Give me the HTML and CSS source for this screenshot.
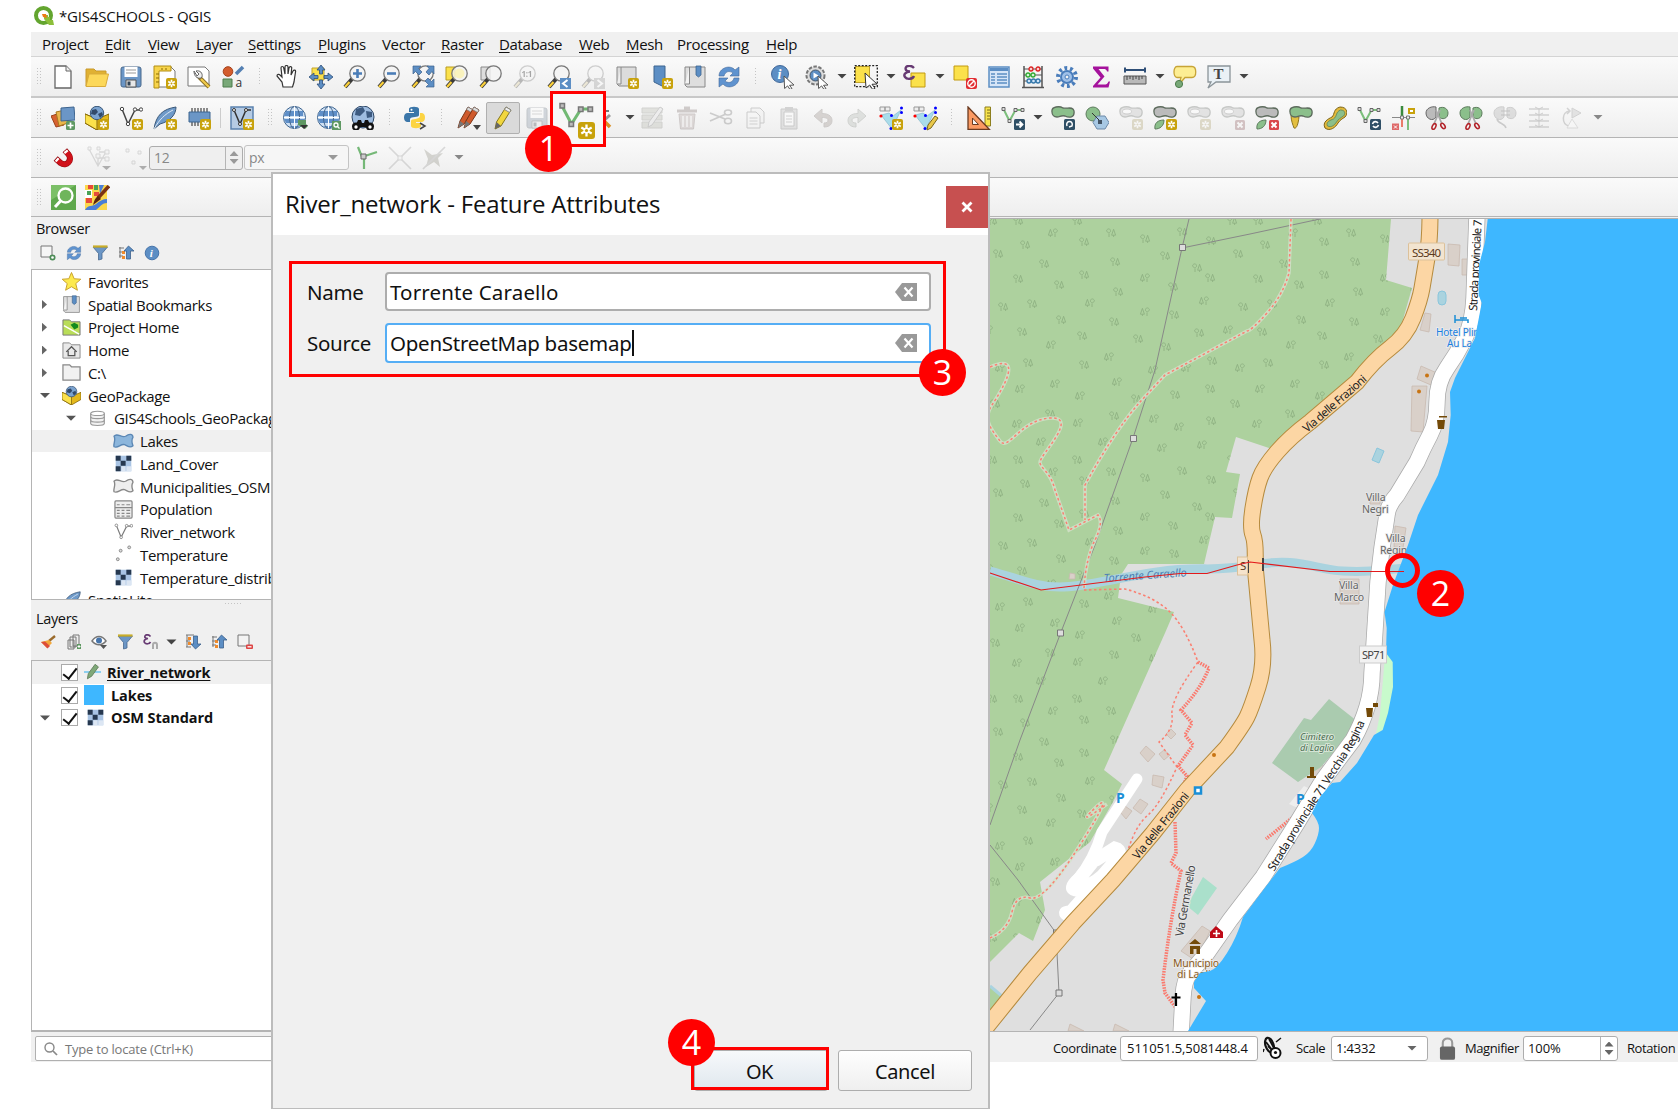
FILE: index.html
```html
<!DOCTYPE html>
<html lang="en">
<head>
<meta charset="utf-8">
<title>*GIS4SCHOOLS - QGIS</title>
<link rel="stylesheet" href="styles.css">
</head>
<body>
<svg class="defs" aria-hidden="true">
<defs>
<g id="star"><rect x="13" y="13" width="11" height="11" rx="2" fill="#c8a20c"/><path d="M18.5 14.7v7.6M15.2 16.6l6.6 3.8M21.8 16.6l-6.6 3.8" stroke="#fff" stroke-width="1.7"/><circle cx="18.5" cy="18.5" r="1" fill="#c8a20c"/></g>
<g id="redx"><rect x="14" y="14" width="10" height="10" rx="1.5" fill="#d9474b"/><path d="M16.5 16.5l5 5M21.5 16.5l-5 5" stroke="#fff" stroke-width="2"/></g>
<g id="lens"><path d="M9 14l-7 8" stroke="#3a3a3a" stroke-width="4"/><path d="M6.5 17l-4.5 5" stroke="#fbd13a" stroke-width="2.2"/><circle cx="14.500" cy="8.500" r="7.700" fill="#f4f4f4" fill-opacity=".8" stroke="#777" stroke-width="1.3"/></g>
<g id="cursor"><path d="M13 11l10 9-4.500.300 2.500 3.200-2 1-2.400-3.600-3 2.600z" fill="#fff" stroke="#555" stroke-width="1"/></g>
<g id="blob"><path d="M1 6c-1-6 8-6 11-4 4 1 10-2 11 3 1 7-5 7-9 5-4-1-5 1-8 1-3 0-5-2-5-5z" stroke="#5d6b5d" stroke-width="1.300"/></g>
<g id="nodes"><path d="M2.500 3l6 12 6-11h7" fill="none" stroke="#7cbf7c" stroke-width="2"/><g fill="#ddd" stroke="#666"><path d="M1 1.500h3v3H1zM7 13.500h3v3H7zM13 2.500h3v3h-3zM20 2.500h3v3h-3z"/></g></g>
<g id="raster"><path d="M1 1h22v22H1z" fill="#a9c4e4"/><path d="M1 1h7v7H1zM16 1h7v7h-7zM8 8h7v7H8zM1 16h7v7H1z" fill="#26384f"/><path d="M16 16h7v7h-7zM9 16h6v7H9z" fill="#dce6f3"/></g>
<g id="snip"><path d="M11 4l6 14M15 4L9 18" stroke="#aaa" stroke-width="1.800"/><ellipse cx="9" cy="20.500" rx="1.700" ry="3" transform="rotate(25 9 20.500)" fill="none" stroke="#b3242a" stroke-width="1.600"/><ellipse cx="18" cy="20" rx="1.700" ry="3" transform="rotate(-35 18 20)" fill="none" stroke="#b3242a" stroke-width="1.600"/></g>
</defs>
<symbol id="i-new" viewBox="0 0 24 24"><path d="M4 1h11l5 5v17H4z" fill="#fff" stroke="#666" stroke-width="1.300"/><path d="M15 1v5h5" fill="#eee" stroke="#666"/></symbol>
<symbol id="i-open" viewBox="0 0 24 24"><path d="M1 4h8l2 2h10v4H4L3 21H1z" fill="#e0b133" stroke="#c99a2c"/><path d="M4 9h19.500l-3 12.500H1z" fill="#fcd85a" stroke="#d9ab3a"/></symbol>
<symbol id="i-save" viewBox="0 0 24 24"><rect x="2" y="2" width="20" height="20" rx="2" fill="#6b96c6" stroke="#49688c"/><path d="M5.500 2h13v10h-13z" fill="#fff"/><path d="M7 5h10M7 8h10" stroke="#999"/><path d="M7 15h10v7H7z" fill="#e8e8e8" stroke="#555"/><path d="M8.500 16.500h3v4h-3z" fill="#345"/></symbol>
<symbol id="i-newlayout" viewBox="0 0 24 24"><path d="M5 2h13l4 4v16H5z" fill="#fff" stroke="#777"/><path d="M1 1h17v5H6v17H1z" fill="#f7d44b" stroke="#b18d12"/><path d="M3 9h3M3 13h3M3 17h3M9 3v2M13 3v2" stroke="#8b6b05"/><use href="#star"/></symbol>
<symbol id="i-layouts" viewBox="0 0 24 24"><path d="M1 2h17l4 4v15H1z" fill="#fff" stroke="#777"/><path d="M12 12l10 10" stroke="#866c24" stroke-width="4"/><path d="M14 14l8 8" stroke="#f1cb4a" stroke-width="2.300"/><path d="M7 6c0 5 3 8 7 7l1-1c1-4-2-7-6-6l3 3-2 2z" fill="#eee" stroke="#666"/></symbol>
<symbol id="i-style" viewBox="0 0 24 24"><circle cx="7" cy="6.500" r="4.800" fill="#d35d2e" stroke="#a5421c"/><path d="M15 9l7-7" stroke="#5480b3" stroke-width="3.500"/><path d="M2 14h9v8H2z" fill="#78a878" stroke="#4d7c4d"/><text x="14.500" y="22" class="ico-sans">a</text></symbol>
<symbol id="i-pan" viewBox="0 0 24 24"><path d="M8 22l-1-5-5-6c0-2 2-2 3-1l2 2-1-9c0-2 2.500-2 2.700 0L10 9V2c0-2 3-2 3 0v7l1-6c.5-2 3-1.500 2.700 0L16 10l2-4c1-1.500 3-1 2.500 1L19 17l-1.500 5z" fill="#fff" stroke="#333" stroke-width="1.200"/></symbol>
<symbol id="i-pansel" viewBox="0 0 24 24"><path d="M3 3h12v12H3z" fill="#fbe14b" stroke="#c2a32a"/><path d="M12 0l4 5h-2.500v4H10.500V5H8zM12 24l4-5h-2.500v-4h-3v4H8zM0 12l5-4v2.500h4v3H5V16zM24 12l-5-4v2.500h-4v3h4V16z" fill="#5c8ec4" stroke="#2e4f79" stroke-width=".8"/></symbol>
<symbol id="i-zin" viewBox="0 0 24 24"><use href="#lens"/><path d="M14.500 4v9M10 8.500h9" stroke="#4b7db7" stroke-width="2.600"/></symbol>
<symbol id="i-zout" viewBox="0 0 24 24"><use href="#lens"/><path d="M10 8.500h9" stroke="#4b7db7" stroke-width="2.600"/></symbol>
<symbol id="i-zfull" viewBox="0 0 24 24"><use href="#lens"/><path d="M2 1h8L7.500 3.500 11 7 8 10 4.500 6.500 2 9zM23 1h-7l2 2.500L15 7l3 3 3-3.500L23 9zM23 22h-8l2.500-2.500L14 16l3-3 3.500 3.500L23 14z" fill="#5c8ec4" stroke="#3e618c" stroke-width=".7"/></symbol>
<symbol id="i-zsel" viewBox="0 0 24 24"><path d="M1 2h9v13H1z" fill="#fbe14b" stroke="#b99d20"/><use href="#lens"/><circle cx="14.500" cy="8.500" r="5" fill="#fbf3b0" opacity=".8"/></symbol>
<symbol id="i-zlay" viewBox="0 0 24 24"><path d="M2 2h9v13H2z" fill="#ddd" stroke="#888"/><use href="#lens"/></symbol>
<symbol id="i-z11" viewBox="0 0 24 24"><use href="#lens"/><text x="8.500" y="11.800" class="ico-11">1:1</text></symbol>
<symbol id="i-zlast" viewBox="0 0 24 24"><use href="#lens"/><path d="M13 13h11v11H13z" fill="#5c8ec4"/><path d="M20.500 15l-4.500 3.500 4.500 3.500" fill="none" stroke="#fff" stroke-width="2"/></symbol>
<symbol id="i-znext" viewBox="0 0 24 24"><use href="#lens"/><path d="M13 13h11v11H13z" fill="#999"/><path d="M16.500 15l4.500 3.500-4.500 3.500" fill="none" stroke="#fff" stroke-width="2"/></symbol>
<symbol id="i-mapview" viewBox="0 0 24 24"><path d="M2 2h19v19H4l-2-2z" fill="#dcdcdc" stroke="#888"/><path d="M6 2v17H2" fill="#eee" stroke="#888"/><use href="#star"/></symbol>
<symbol id="i-newbm" viewBox="0 0 24 24"><path d="M5 1h11v20h-3L5 17z" fill="#5c8ec4" stroke="#3d648f"/><use href="#star"/></symbol>
<symbol id="i-bm" viewBox="0 0 24 24"><path d="M2 2h20v20H4l-2-2z" fill="#dedede" stroke="#888"/><path d="M6.500 2v17H2" fill="#f3f3f3" stroke="#888"/><path d="M13 1h5v9l-2.500 2-2.500-2z" fill="#5c8ec4" stroke="#3d648f" stroke-width=".8"/></symbol>
<symbol id="i-refresh" viewBox="0 0 24 24"><path d="M2 11C2 3 13-1 18 5l4-3v9h-9l3-3c-4-3-8-1-9 3zM22 13c0 8-11 12-16 6l-4 3v-9h9l-3 3c4 3 8 1 9-3z" fill="#5f93cf" stroke="#44699a" stroke-width=".6"/></symbol>
<symbol id="i-ident" viewBox="0 0 24 24"><circle cx="9" cy="9" r="8.500" fill="#5c8ec4" stroke="#42699a"/><text x="6.500" y="14" class="ico-i">i</text><use href="#cursor"/></symbol>
<symbol id="i-action" viewBox="0 0 24 24"><circle cx="10.500" cy="10.500" r="9" fill="#ddd" stroke="#777" stroke-width="2" stroke-dasharray="3.500 1.500"/><circle cx="10.500" cy="10.500" r="5.500" fill="#5c8ec4" stroke="#456"/><path d="M8.500 7.500l5 3-5 3z" fill="#fff"/><use href="#cursor"/></symbol>
<symbol id="i-select" viewBox="0 0 24 24"><path d="M1.500 1.500h14v16h-14z" fill="#fbe14b" stroke="#c2a32a"/><path d="M.700.700h22.600v21H.7z" fill="none" stroke="#222" stroke-width="1.300" stroke-dasharray="2 1.500"/><path d="M11 8l12 11-5 .3 3 4-2.300 1.200-3-4.500-3.700 3z" fill="#fff" stroke="#333"/></symbol>
<symbol id="i-expr" viewBox="0 0 24 24"><path d="M8 8h14v14H8z" fill="#fbe14b" stroke="#c29a10"/><path d="M11 3C7-1 1 1 3 5c.7 1.500 2 1.500 4 1.500C3 7 0 9 2 12c2 3 8 2 9-1" fill="none" stroke="#673a73" stroke-width="2.400"/></symbol>
<symbol id="i-desel" viewBox="0 0 24 24"><path d="M1 1h14v14H1z" fill="#fbe14b" stroke="#c29a10"/><rect x="13" y="13" width="11" height="11" rx="2" fill="#e22d32"/><circle cx="18.500" cy="18.500" r="3.700" fill="none" stroke="#fff" stroke-width="1.400"/><path d="M16 21l5-5" stroke="#fff" stroke-width="1.400"/></symbol>
<symbol id="i-table" viewBox="0 0 24 24"><path d="M2 2h20v20H2z" fill="#d6e5f7" stroke="#5c8ec4" stroke-width="1.500"/><path d="M3 4.500h18" stroke="#5c8ec4" stroke-width="3"/><path d="M4 9h4M10 9h10M4 12h4M10 12h10M4 15h4M10 15h10M4 18h4M10 18h10" stroke="#5c8ec4" stroke-width="1.300"/></symbol>
<symbol id="i-abacus" viewBox="0 0 24 24"><path d="M3 1v21M21 1v21M1 22.500h22" stroke="#555" stroke-width="1.500"/><path d="M3 4h18M3 10h18M3 16h18" stroke="#555"/><g stroke-width="1.300"><g fill="#fbd0d0" stroke="#d22"><circle cx="10" cy="4" r="2"/><circle cx="17" cy="4" r="2"/></g><g fill="#d5f2d5" stroke="#3a3"><circle cx="7" cy="10" r="2"/><circle cx="12" cy="10" r="2"/></g><g fill="#d0e4f8" stroke="#37a"><circle cx="8" cy="16" r="2"/><circle cx="12.500" cy="16" r="2"/><circle cx="17" cy="16" r="2"/></g></g></symbol>
<symbol id="i-gear" viewBox="0 0 24 24"><circle cx="12" cy="12" r="9" fill="none" stroke="#4a7dbb" stroke-width="4" stroke-dasharray="2.800 2.850"/><circle cx="12" cy="12" r="6" fill="#9fc0e8" stroke="#4a7dbb" stroke-width="2"/><circle cx="12" cy="12" r="2" fill="#f3f3f3" stroke="#4a7dbb"/></symbol>
<symbol id="i-sum" viewBox="0 0 24 24"><path d="M4 1.500h15.500v5H18c-.5-2-1.500-2.500-4-2.500H9.500l6 7.500-7 8H15c2.500 0 3.500-.5 4.500-3h1.500l-1.500 6H4V21l7.500-8.500L4 3.500z" fill="#a5129c"/></symbol>
<symbol id="i-measure" viewBox="0 0 24 24"><path d="M2 5h20M2 2.500v5M22 2.500v5" stroke="#2f4f77" stroke-width="2"/><path d="M1 11h22v8H1z" fill="#b9b9b9" stroke="#555"/><path d="M4 11v4M7 11v3M10 11v4M13 11v3M16 11v4M19 11v3" stroke="#444"/></symbol>
<symbol id="i-tip" viewBox="0 0 24 24"><path d="M4 1.500h15c5 0 5 11 0 11h-7l-6 7 2-7H4c-4 0-4-11 0-11z" fill="#fdee93" stroke="#c7a436" stroke-width="1.300"/><circle cx="6" cy="19" r="3.600" fill="#78a878" stroke="#4d7c4d"/></symbol>
<symbol id="i-text" viewBox="0 0 24 24"><path d="M1 1h22v16H9l-8 6 3-6H1z" fill="#eaf1f6" stroke="#8b9499" stroke-width="1.300"/><text x="6.500" y="14" class="ico-t">T</text></symbol>
<symbol id="i-ds" viewBox="0 0 24 24"><path d="M0 10l9-3 4 12-8 2z" fill="#d76230" stroke="#9c421b"/><path d="M5 6l9-2 3 13-9 3z" fill="#e9b64b" stroke="#a7781d"/><path d="M10 2l13-1 1 13-14 1z" fill="#6b96c6" stroke="#3d648f"/><rect x="15" y="15" width="9" height="9" rx="1.500" fill="#5e9862"/><path d="M19.500 16.500v6M16.500 19.500h6" stroke="#fff" stroke-width="1.700"/></symbol>
<symbol id="i-gpkg" viewBox="0 0 24 24"><path d="M0 8l12 5 12-5v9l-12 7-12-7z" fill="#e4b81c" stroke="#85680a"/><path d="M0 8l12 5v11L0 17z" fill="#fbe14b" stroke="#85680a"/><circle cx="12" cy="7" r="6.700" fill="#7ba3d0" stroke="#3b5878"/><path d="M7 4l4-1 2 3-3 3-4-1zM13 8l4-2 1 3-3 3z" fill="#324a6b"/></symbol>
<symbol id="i-vec" viewBox="0 0 24 24"><path d="M3 3l6 15 7-14h6" fill="none" stroke="#444" stroke-width="1.500"/><g fill="#fff" stroke="#444"><circle cx="3" cy="3" r="1.700"/><circle cx="9" cy="18" r="1.700"/><circle cx="16" cy="3.500" r="1.700"/><circle cx="22" cy="3.500" r="1.700"/></g></symbol>
<symbol id="i-feather" viewBox="0 0 24 24"><path d="M1 23C3 9 10 3 23 1c0 7-5 14-16 17z" fill="#6f9ac9" stroke="#3b5878"/><path d="M1 23C6 14 12 8 20 4" stroke="#dce8f5" fill="none"/></symbol>
<symbol id="i-mem" viewBox="0 0 24 24"><path d="M5 2v18M8 2v18M11 2v18M14 2v18M17 2v18M20 2v18" stroke="#444" stroke-width="1.200"/><path d="M2 6h21v10H2z" fill="#6b96c6" stroke="#3d648f"/></symbol>
<symbol id="i-virt" viewBox="0 0 24 24"><path d="M1 1h22v22H1z" fill="#b5cbe4" stroke="#5b82af" stroke-width="1.500"/><path d="M4 4l6 14 6-14h5" fill="none" stroke="#333" stroke-width="1.500"/><g fill="#fff" stroke="#333"><circle cx="4" cy="4" r="1.500"/><circle cx="10" cy="18" r="1.500"/><circle cx="16" cy="4" r="1.500"/></g></symbol>
<symbol id="i-globe" viewBox="0 0 24 24"><circle cx="11.500" cy="11.500" r="11" fill="#cfe0f3" stroke="#3d648f"/><path d="M3 5h17v5H1zM1 13h21l-2 4H3zM6 20h11l-5 3z" fill="#5f8fc8"/><ellipse cx="11.500" cy="11.500" rx="5" ry="11" fill="none" stroke="#44668d"/><path d="M11.500.5v22M1 11.500h21" stroke="#fff"/></symbol>
<symbol id="i-bino" viewBox="0 0 24 24"><circle cx="12" cy="11" r="11" fill="#9ebce0" stroke="#2e4664"/><path d="M5 3l7-2 2 4-5 5-5-1zM15 5l6 1v5l-5 1z" fill="#3d5a80"/><path d="M4 21l3-7h3l1 3h2l1-3h3l3 7z" fill="#111"/><circle cx="5" cy="20.500" r="4" fill="#111"/><circle cx="19" cy="20.500" r="4" fill="#111"/><circle cx="5" cy="21" r="1.700" fill="#fff"/><circle cx="19" cy="21" r="1.700" fill="#fff"/></symbol>
<symbol id="i-py" viewBox="0 0 24 24"><path d="M6 3c0-3 10-3 10 0v6c0 3-8 1-9 4v3H4c-4 0-4-9 0-9h7V6H6z" fill="#3b76a9"/><path d="M17 7h2c4 0 4 9 0 9h-6v1h5v3c0 3-10 3-10 0v-5c0-3 9-1 9-5z" fill="#fcd443"/><circle cx="8.500" cy="3.700" r="1" fill="#fff"/><path d="M17 17l5 3-5 3" fill="none" stroke="#444" stroke-width="1.500"/></symbol>
<symbol id="i-pens" viewBox="0 0 24 24"><path d="M1 22l2-7L11 1l5 3-9 14z" fill="#cf5a2c" stroke="#7c3516"/><path d="M11 1l5 3-1.500 2.500-5-3z" fill="#ddd" stroke="#777" stroke-width=".7"/><path d="M1 22l2-7 4 3z" fill="#777"/><path d="M7 22l2-7L17 1l5 3-9 14z" fill="#cf5a2c" stroke="#7c3516"/><path d="M17 1l5 3-1.500 2.500-5-3z" fill="#ddd" stroke="#777" stroke-width=".7"/><path d="M7 22l2-7 4 3z" fill="#777"/></symbol>
<symbol id="i-pen" viewBox="0 0 24 24"><path d="M4 23l1.500-7L15 1l5 3-10 16z" fill="#f1d63e" stroke="#85761c"/><path d="M15 1l5 3-1.500 2.500-5-3z" fill="#eee" stroke="#888"/><path d="M4 23l1.500-7 4.500 4z" fill="#666"/></symbol>
<symbol id="i-tools" viewBox="0 0 24 24"><path d="M2 5h14" stroke="#777" stroke-width="2"/><path d="M5 20L17 9" stroke="#999" stroke-width="3"/><path d="M7 11l10 10" stroke="#d9912a" stroke-width="3.500"/></symbol>
<symbol id="i-form" viewBox="0 0 24 24"><path d="M1 2h20v5H1zM1 9h20v5H1zM1 16h20v6H1z" fill="#b3b89a" stroke="#888c75"/><path d="M7 21l1-5L19 1l3 2-11 16z" fill="#ddd" stroke="#777"/></symbol>
<symbol id="i-trash" viewBox="0 0 24 24"><path d="M4 8h16l-1.500 15h-13z" fill="#c59b93" stroke="#936b64"/><path d="M2 5h20M9 2h6" stroke="#936b64" stroke-width="3"/><path d="M8 10v11M12 10v11M16 10v11" stroke="#fff" stroke-width="1.300"/></symbol>
<symbol id="i-cut" viewBox="0 0 24 24"><path d="M1 7l15 6M1 15L17 8" stroke="#777" stroke-width="1.800"/><ellipse cx="19" cy="6.500" rx="3.500" ry="2.500" fill="none" stroke="#777" stroke-width="1.600"/><ellipse cx="19" cy="15" rx="3.500" ry="2.800" fill="none" stroke="#777" stroke-width="1.600"/></symbol>
<symbol id="i-copy" viewBox="0 0 24 24"><path d="M8 2h9l4 4v11H8z" fill="#eee" stroke="#777"/><path d="M4 6h9l4 4v12H4z" fill="#f5f5f5" stroke="#777"/><path d="M6.500 12h8M6.500 15h8M6.500 18h8" stroke="#888"/></symbol>
<symbol id="i-paste" viewBox="0 0 24 24"><path d="M4 3h16v20H4z" fill="#bbb" stroke="#777"/><path d="M7 6h10v14H7z" fill="#fff" stroke="#777"/><path d="M8 1h8v4H8z" fill="#888"/><path d="M9 10h6M9 13h6M9 16h6" stroke="#888"/></symbol>
<symbol id="i-undo" viewBox="0 0 24 24"><path d="M3 10l8-7v4.500c8 0 10 4 10 7 0 5-4 6.500-8 6.500v-4c3 0 4-1 4-3 0-1.500-2-2.500-6-2.500V17z" fill="#a9897a" stroke="#8a7468"/></symbol>
<symbol id="i-redo" viewBox="0 0 24 24"><path d="M21 10l-8-7v4.500c-8 0-10 4-10 7 0 5 4 6.500 8 6.500v-4c-3 0-4-1-4-3 0-1.500 2-2.500 6-2.500V17z" fill="#a9b9a5" stroke="#7d8c7a"/></symbol>
<symbol id="i-topo" viewBox="0 0 24 24"><path d="M2 9l11 14L22 4l-8 6-4-3z" fill="#a9dcea" stroke="#7fb2c6" stroke-width=".6"/><path d="M1 1h5v4H1zM6 1h5v4H6z" fill="#eee" stroke="#999"/><circle cx="2" cy="10" r="1.600" fill="#f00"/><g fill="#00f"><circle cx="22.500" cy="2" r="1.500"/><circle cx="22.500" cy="6.500" r="1.500"/><circle cx="12.500" cy="9.500" r="1.500"/><circle cx="12" cy="22.500" r="1.500"/></g></symbol>
<symbol id="i-tri" viewBox="0 0 24 24"><path d="M18 1h5.500v19H18z" fill="#f8e44d" stroke="#8d7f1e"/><path d="M20 4h3M20 7h3M20 10h3M20 13h3" stroke="#776b1c"/><path d="M1 1l21.500 22.500H1z" fill="#fa9a63" stroke="#6b3a20" stroke-width="1.300"/><path d="M5.500 12l6 6.500h-6z" fill="#f5f5f5" stroke="#6b3a20"/></symbol>
<symbol id="i-move" viewBox="0 0 24 24"><use href="#nodes"/><rect x="13" y="13" width="11" height="11" rx="1.500" fill="#2f4f66"/><path d="M15 18.500h6M18.500 15.500l3 3-3 3" fill="none" stroke="#fff" stroke-width="1.800"/></symbol>
<symbol id="i-rot" viewBox="0 0 24 24"><use href="#blob" fill="#8bbf8b"/><rect x="13" y="13" width="11" height="11" rx="1.500" fill="#2f4f66"/><path d="M16 20c-2-6 7-6 5 0l-3 1" fill="none" stroke="#fff" stroke-width="1.500"/></symbol>
<symbol id="i-simp" viewBox="0 0 24 24"><circle cx="8" cy="8" r="7" fill="#8bbf8b" stroke="#5d7c5d"/><path d="M12 10h8l4 6.500-4 6.500h-8l-4-6.500z" fill="#a7c8e4" stroke="#6c89a8"/><path d="M7 7l8 8" stroke="#333"/><path d="M13 14h4v4h-4z" fill="#456"/></symbol>
<symbol id="i-ring" viewBox="0 0 24 24"><use href="#blob" fill="#bbb"/><ellipse cx="8" cy="5.500" rx="4.500" ry="2.500" fill="#fff" stroke="#777"/><use href="#star"/></symbol>
<symbol id="i-part" viewBox="0 0 24 24"><use href="#blob" fill="#bbb"/><path d="M2 23c-1-6 3-9 9-9 0 6-4 9-9 9z" fill="#8bbf8b" stroke="#5d7c5d"/><use href="#star"/></symbol>
<symbol id="i-delring" viewBox="0 0 24 24"><use href="#blob" fill="#bbb"/><ellipse cx="8" cy="5.500" rx="4.500" ry="2.500" fill="#fff" stroke="#777"/><use href="#redx"/></symbol>
<symbol id="i-delpart" viewBox="0 0 24 24"><use href="#blob" fill="#bbb"/><path d="M2 23c-1-6 3-9 9-9 0 6-4 9-9 9z" fill="#8bbf8b" stroke="#5d7c5d"/><use href="#redx"/></symbol>
<symbol id="i-reshape" viewBox="0 0 24 24"><path d="M2 9c0 6 2 10 3 13 2 1 4-2 5-11z" fill="#e3bf3f" stroke="#8d7420"/><use href="#blob" fill="#8bbf8b"/></symbol>
<symbol id="i-offset" viewBox="0 0 24 24"><path d="M2 22c-3-6 3-9 7-11 3-3 1-8 8-10 8 0 8 7 5 10-3 2-5 3-7 6-2 4-8 9-13 5z" fill="#e3b93a" stroke="#7c651a"/><path d="M4.500 20c-2-4 3-6 6-7 4-3 2-7 7-9 5 0 5 4 3 6-3 2-5 3-7 6-2 3-5 6-9 4z" fill="#8bbf8b" stroke="#6b8f5b"/></symbol>
<symbol id="i-rev" viewBox="0 0 24 24"><use href="#nodes"/><rect x="13" y="13" width="11" height="11" rx="1.500" fill="#2f4f66"/><path d="M15.500 18c1-3 4-3 5.500-1M21.500 19c-1 3-4 3-5.500 1" fill="none" stroke="#fff" stroke-width="1.600"/></symbol>
<symbol id="i-trim" viewBox="0 0 24 24"><path d="M1 11.500h23" stroke="#888"/><path d="M11 0v11" stroke="#3a8a3e" stroke-width="2.500"/><path d="M11 13v8" stroke="#e5543a" stroke-width="1.500"/><path d="M17 13v11" stroke="#7cbf7c" stroke-width="2"/><path d="M9.500 10h3v3h-3zM15.500 10h3v3h-3z" fill="#eee" stroke="#777"/><path d="M17 2h7v6h-7z" fill="#c8a20c"/><path d="M19 4h3v2h-3z" fill="#fff"/><path d="M1 17.500h7V24H1z" fill="#de6a6a"/><path d="M3 19.500l3 3M6 19.500l-3 3" stroke="#fff"/></symbol>
<symbol id="i-split1" viewBox="0 0 24 24"><path d="M11 1v10C8 16 1 13 1 7c0-5 6-7 10-6z" fill="#bbb" stroke="#666"/><path d="M14 2c5-2 9 1 9 5 0 6-6 7-9 4z" fill="#8bbf8b" stroke="#5d7c5d"/><use href="#snip"/></symbol>
<symbol id="i-split2" viewBox="0 0 24 24"><path d="M11 1v10C8 16 1 13 1 7c0-5 6-7 10-6z" fill="#8bbf8b" stroke="#5d7c5d"/><path d="M14 2c5-2 9 1 9 5 0 6-6 7-9 4z" fill="#8bbf8b" stroke="#5d7c5d"/><use href="#snip"/></symbol>
<symbol id="i-merge" viewBox="0 0 24 24"><path d="M11 1v10C8 16 1 13 1 7c0-5 6-7 10-6zM14 2c5-2 9 1 9 5 0 6-6 7-9 4z" fill="#aaa" stroke="#777"/><path d="M8 5h9M8 9h9" stroke="#555"/><path d="M4 13c1 5 8 4 9 9" fill="none" stroke="#777" stroke-width="1.500"/></symbol>
<symbol id="i-mergea" viewBox="0 0 24 24"><path d="M2 3h20M2 9h20M2 15h20M2 21h20" stroke="#888" stroke-width="1.500"/><path d="M8 1l4 2 4-2M8 7l4 2 4-2M8 13l4 2 4-2M8 19l4 2 4-2M12 3v18" fill="none" stroke="#777"/></symbol>
<symbol id="i-rotp" viewBox="0 0 24 24"><path d="M8 20C0 18 1 6 8 5M6 2l3 3-3 3" fill="none" stroke="#888" stroke-width="1.500"/><path d="M11 2l9 5-9 5z" fill="#bbb" stroke="#888"/><path d="M11 13l6 9H6z" fill="#fff" stroke="#aaa"/></symbol>
<symbol id="i-magnet" viewBox="0 0 24 24"><g fill="none" stroke-width="6.500"><path d="M14 3.500L18 8C23 14 16 22 9.500 17.500L4 12.500" stroke="#8f0b10"/><path d="M14.500 4.200L18 8C23 14 16 22 9.500 17.500L4.700 13.200" stroke="#d0121a" stroke-width="5.500"/><path d="M14.500 4.200l1.600 1.900M4.700 13.200l1.800 1.600" stroke="#fff" stroke-width="4.800"/></g></symbol>
<symbol id="i-snapv" viewBox="0 0 24 24"><path d="M2 3l9 17L20 4M12 6h9M11 20V10M11 12h9" fill="none" stroke="#999" stroke-width="1.300"/><path d="M1 1h3v3H1zM10 1h3v3h-3zM18 4h4v4h-4zM18 11h4v4h-4zM9 8h4v4H9z" fill="#eee" stroke="#999"/></symbol>
<symbol id="i-snapp" viewBox="0 0 24 24"><path d="M3 3h3v3H3zM15 5h3v3h-3zM9 15h3v3H9z" fill="#eee" stroke="#999"/></symbol>
<symbol id="i-axis" viewBox="0 0 24 24"><path d="M4 1l4 10 15-5M10 12v11" fill="none" stroke="#75b877" stroke-width="2.200"/><path d="M7 8h5v5H7z" fill="#ccc" stroke="#666"/></symbol>
<symbol id="i-cross" viewBox="0 0 24 24"><path d="M1 1l22 22M23 1L1 23" stroke="#999" stroke-width="1.700"/><path d="M10 10h4v4h-4z" fill="#eee" stroke="#999"/></symbol>
<symbol id="i-cross2" viewBox="0 0 24 24"><path d="M2 3l8 6 11-2-5 5 2 9-6-5-8 5 2-8z" fill="#8f8e68"/><path d="M23 1L1 23" stroke="#999" stroke-width="1.700"/></symbol>
<symbol id="i-qms" viewBox="0 0 25 25"><path d="M0 0h25v25H0z" fill="#5fa84d"/><path d="M0 0h25L0 15z" fill="#7cc068"/><circle cx="14.500" cy="10.500" r="7" fill="#6fb55c" stroke="#fff" stroke-width="2.300"/><path d="M9.500 16L4 22" stroke="#fff" stroke-width="3"/></symbol>
<symbol id="i-qms2" viewBox="0 0 25 25"><path d="M0 0h22v25H0z" fill="#fbd84b"/><path d="M0 5h7v8H0z" fill="#fff"/><path d="M3 0h5v4H3zM1 13h6v5H1zM9 7h5v4H9z" fill="#e64b3b"/><path d="M9 0h4v5H9zM2 6h4v4H2z" fill="#4aa257"/><path d="M0 25c3-6 8-3 11-6s7-5 11-5v4c-5 0-6 3-11 7zM14 0h5l-4 9z" fill="#4a7fd6"/><path d="M24 1L13 13" stroke="#7c3313" stroke-width="3.600"/><path d="M13 11l3 3-8 6c1-4 2-7 5-9z" fill="#5b240c"/></symbol>
<symbol id="i-add" viewBox="0 0 16 16"><path d="M1 1h11v11H1z" fill="#f6f6f6" stroke="#777"/><circle cx="12.500" cy="12.500" r="2.200" fill="#fff" stroke="#4d8c57" stroke-width="1.700"/></symbol>
<symbol id="i-rem" viewBox="0 0 16 16"><path d="M1 1h11v11H1z" fill="#f3f3f3" stroke="#777"/><rect x="9" y="10.500" width="7" height="4.500" rx="1" fill="#d44"/><path d="M10.500 12.800h4" stroke="#fff" stroke-width="1.300"/></symbol>
<symbol id="i-filter" viewBox="0 0 16 16"><path d="M1 2l5.500 6.500V15L10 14V8.500L15.500 2z" fill="#6b96c6" stroke="#48688f" stroke-width=".8"/><path d="M1 1.500h14.500" stroke="#c9ad29" stroke-width="2.200"/></symbol>
<symbol id="i-up" viewBox="0 0 16 16"><path d="M1 3h5M1 7h4M1 11h4M2 2v11" stroke="#777"/><path d="M4 6h3v3H4zM4 11h3v3H4z" fill="#f08b2b"/><path d="M10.500 1L16 6h-3.500v8h-4V6H6z" fill="#5c8ec4" stroke="#3b5f8c" stroke-width=".8"/></symbol>
<symbol id="i-down" viewBox="0 0 16 16"><path d="M1 1h8M1 7h4M1 13h5M2 1v12" stroke="#777"/><path d="M3 3h3v3H3zM3 8h3v3H3z" fill="#f08b2b"/><path d="M10.500 15L16 10h-3.500V2h-4v8H6z" fill="#5c8ec4" stroke="#3b5f8c" stroke-width=".8"/></symbol>
<symbol id="i-info" viewBox="0 0 16 16"><circle cx="8" cy="8" r="6.800" fill="#5c8ec4" stroke="#4674aa"/><text x="5.700" y="12" class="ico-i2">i</text></symbol>
<symbol id="i-brush" viewBox="0 0 16 16"><path d="M9 7l6-5" stroke="#9a6a2c" stroke-width="2.300"/><path d="M1 8l8-2 3 3-5 5z" fill="#f3a83b"/><path d="M1 8l4-.5L10 12l-2.500 2.500z" fill="#dc4d3a"/></symbol>
<symbol id="i-group" viewBox="0 0 16 16"><path d="M2 6h6v9H2zM4 3h6v10H4zM7 1h6v11H7z" fill="#eee" stroke="#777"/><path d="M11 10h4v5h-4z" fill="#5e9862"/><path d="M13 11v3M11.500 12.500h3" stroke="#fff"/></symbol>
<symbol id="i-eye" viewBox="0 0 16 16"><path d="M1 7c4-6 10-6 14 0-4 5-10 5-14 0z" fill="#fff" stroke="#777" stroke-width="1.500"/><circle cx="8" cy="6.500" r="3" fill="#4674aa"/><path d="M9 11h7l-3.500 4z" fill="#555"/></symbol>
<symbol id="i-eps" viewBox="0 0 16 16"><path d="M7.500 2.500C5-.5 1 1 2 3.500c.5 1 1.500 1 3 1C2 5 .5 6.500 1.500 8.500c1.500 2 5 1.500 6-.5" fill="none" stroke="#673a73" stroke-width="1.700"/><path d="M10 15v-4c0-3 4-3 4 0v4" fill="none" stroke="#aaa" stroke-width="2"/></symbol>
<symbol id="i-fav" viewBox="0 0 20 20"><path d="M10 .5l2.800 6.600 7 .5-5.300 4.600 1.700 7L10 15.500l-6.200 3.700 1.700-7L.2 7.600l7-.5z" fill="#fdea4e" stroke="#c79f2a"/></symbol>
<symbol id="i-fproj" viewBox="0 0 20 20"><path d="M1 2h7l2 2h9v14H1z" fill="#b9dd58" stroke="#777"/><path d="M2 8l16 9" stroke="#fff" stroke-width="1.500"/><path d="M9 7l4-2 4 2v3l-4 2z" fill="#128a1e"/></symbol>
<symbol id="i-fhome" viewBox="0 0 20 20"><path d="M1 2h7l2 2h9v14H1z" fill="#e9e9e9" stroke="#888"/><path d="M4.500 11.500L10 6l5.500 5.500M6.500 10.500v5h7v-5" fill="none" stroke="#555" stroke-width="1.300"/></symbol>
<symbol id="i-folder" viewBox="0 0 20 20"><path d="M1 2h7l2 2h9v14H1z" fill="#f1f1f1" stroke="#888" stroke-width="1.300"/></symbol>
<symbol id="i-db" viewBox="0 0 20 20"><path d="M2 4v12c0 3 16 3 16 0V4" fill="#f1f1f1" stroke="#999" stroke-width="1.400"/><ellipse cx="10" cy="4" rx="8" ry="2.500" fill="#fff" stroke="#999" stroke-width="1.400"/><path d="M2 8c0 3 16 3 16 0M2 12c0 3 16 3 16 0" fill="none" stroke="#999" stroke-width="1.400"/></symbol>
<symbol id="i-poly" viewBox="0 0 20 16"><path d="M1 3C4-1 8 5 12 3c4-3 7-2 7 1-2 3-1 5 0 8-3 3-5 0-8-1-4-1-6 4-10 2C0 10 3 7 1 3z" stroke-width="1.300"/></symbol>
<symbol id="i-tbl" viewBox="0 0 20 20"><rect x="1" y="1" width="18" height="18" rx="1" fill="#eee" stroke="#888" stroke-width="1.300"/><path d="M3 5h3M8 5h3M13 5h4M1 8h18M3 11h3M8 11h3M13 11h4M3 14h3M8 14h3M13 14h4M3 17h3M8 17h3M13 17h4" stroke="#888" stroke-width="1.300"/></symbol>
<symbol id="i-pts" viewBox="0 0 20 20"><g fill="#ddd" stroke="#888"><circle cx="4" cy="15" r="1.500"/><circle cx="7" cy="6" r="1.500"/><circle cx="16" cy="2.500" r="1.500"/></g></symbol>
<symbol id="i-raster" viewBox="0 0 24 24"><use href="#raster"/></symbol>
<symbol id="i-editing" viewBox="0 0 20 20"><path d="M0 10h20" stroke="#6fc4ef" stroke-width="1.800"/><path d="M4 18l1-6 8-11 4 3-8 11z" fill="#7fa878" stroke="#5e7c58"/></symbol>
<symbol id="i-lock" viewBox="0 0 18 26"><path d="M4 12V7c0-6 10-6 10 0v5" fill="none" stroke="#999" stroke-width="2.200"/><rect x="1" y="11" width="16" height="14" rx="2" fill="#666"/></symbol>
<symbol id="i-ext" viewBox="0 0 20 22"><g fill="none" stroke="#111"><ellipse cx="6.500" cy="8" rx="4" ry="7.500" stroke-width="2.200" transform="rotate(-18 6.500 8)"/><path d="M3 5l6 8M6 2l5 9M5 9l4 4" stroke-width="1.800"/><circle cx="12.500" cy="16" r="5" fill="#fff" stroke-width="2"/><path d="M13 5l5-4M1 12l-1 3" stroke-width="1.500"/></g><circle cx="12.500" cy="15.500" r="1.600" fill="#111"/></symbol>
<symbol id="i-clear" viewBox="0 0 22 18"><path d="M7 0h15v18H7L0 9z" fill="#999"/><path d="M9.500 4.500l8 9M17.500 4.500l-8 9" stroke="#fff" stroke-width="2.200"/></symbol>
<symbol id="i-search" viewBox="0 0 14 14"><circle cx="5.500" cy="5.500" r="4.500" fill="none" stroke="#888" stroke-width="1.400"/><path d="M9 9l4 4" stroke="#888" stroke-width="1.700"/></symbol>
</svg>

<header class="titlebar">
<svg class="logo" viewBox="0 0 20 20"><circle cx="9.500" cy="9.500" r="7.500" fill="none" stroke="#63a52f" stroke-width="4"/><path d="M10 9h4v2h2v3h3l1 5h-5l-5-6z" fill="#8cbf3a"/><path d="M8 8h4l1 4-4-1z" fill="#ee7913"/></svg>
<span>*GIS4SCHOOLS - QGIS</span>
</header>

<div class="app">
<nav class="menubar"><span>Pro<u>j</u>ect</span><span><u>E</u>dit</span><span><u>V</u>iew</span><span><u>L</u>ayer</span><span><u>S</u>ettings</span><span><u>P</u>lugins</span><span>Vect<u>o</u>r</span><span><u>R</u>aster</span><span><u>D</u>atabase</span><span><u>W</u>eb</span><span><u>M</u>esh</span><span>Pro<u>c</u>essing</span><span><u>H</u>elp</span></nav>

<div class="toolbar"><i class="grip first"></i><b><svg><use href="#i-new"/></svg></b><b><svg><use href="#i-open"/></svg></b><b><svg><use href="#i-save"/></svg></b><b><svg><use href="#i-newlayout"/></svg></b><b><svg><use href="#i-layouts"/></svg></b><b><svg><use href="#i-style"/></svg></b><i class="grip"></i><b><svg><use href="#i-pan"/></svg></b><b><svg><use href="#i-pansel"/></svg></b><b><svg><use href="#i-zin"/></svg></b><b><svg><use href="#i-zout"/></svg></b><b><svg><use href="#i-zfull"/></svg></b><b><svg><use href="#i-zsel"/></svg></b><b><svg><use href="#i-zlay"/></svg></b><b class="off"><svg><use href="#i-z11"/></svg></b><b><svg><use href="#i-zlast"/></svg></b><b class="off"><svg><use href="#i-znext"/></svg></b><b><svg><use href="#i-mapview"/></svg></b><b><svg><use href="#i-newbm"/></svg></b><b><svg><use href="#i-bm"/></svg></b><b><svg><use href="#i-refresh"/></svg></b><i class="grip"></i><b><svg><use href="#i-ident"/></svg></b><b><svg><use href="#i-action"/></svg></b><i class="arr n15"></i><b><svg><use href="#i-select"/></svg></b><i class="arr n15"></i><b><svg><use href="#i-expr"/></svg></b><i class="arr"></i><b><svg><use href="#i-desel"/></svg></b><b><svg><use href="#i-table"/></svg></b><b><svg><use href="#i-abacus"/></svg></b><b><svg><use href="#i-gear"/></svg></b><b><svg><use href="#i-sum"/></svg></b><b><svg><use href="#i-measure"/></svg></b><i class="arr"></i><b><svg><use href="#i-tip"/></svg></b><b><svg><use href="#i-text"/></svg></b><i class="arr"></i></div>

<div class="toolbar"><i class="grip first"></i><b><svg><use href="#i-ds"/></svg></b><b><svg viewBox="0 0 24 24"><use href="#i-gpkg"/><use href="#star"/></svg></b><b><svg viewBox="0 0 24 24"><use href="#i-vec"/><use href="#star"/></svg></b><b><svg viewBox="0 0 24 24"><use href="#i-feather"/><use href="#star"/></svg></b><b><svg viewBox="0 0 24 24"><use href="#i-mem"/><use href="#star"/></svg></b><i class="sep"></i><b><svg viewBox="0 0 24 24"><use href="#i-virt"/><use href="#star"/></svg></b><i class="grip n18"></i><b><svg viewBox="0 0 24 24"><use href="#i-globe"/><path d="M15 14h8v4l2 2-3 3-7-4z" fill="#5e9862"/><path d="M17 19h8l-4 4z" fill="#333"/></svg></b><b><svg viewBox="0 0 24 24"><use href="#i-globe"/><path d="M15 15h9v9h-9z" fill="#5e9862"/><circle cx="19" cy="19" r="2" fill="none" stroke="#fff" stroke-width="1.300"/><path d="M20.500 20.500l2 2" stroke="#fff" stroke-width="1.300"/></svg></b><b><svg><use href="#i-bino"/></svg></b><i class="grip n18"></i><b><svg><use href="#i-py"/></svg></b><i class="grip"></i><b><svg viewBox="0 0 24 24"><use href="#i-pens"/><path d="M16 19h8l-4 5z" fill="#444"/></svg></b><b class="on"><svg><use href="#i-pen"/></svg></b><b class="off"><svg><use href="#i-save"/></svg></b><b></b><b><svg><use href="#i-tools"/></svg></b><i class="arr n14"></i><b class="off"><svg><use href="#i-form"/></svg></b><b class="off"><svg><use href="#i-trash"/></svg></b><b class="off"><svg><use href="#i-cut"/></svg></b><b class="off"><svg><use href="#i-copy"/></svg></b><b class="off"><svg><use href="#i-paste"/></svg></b><b class="off"><svg><use href="#i-undo"/></svg></b><b class="off"><svg><use href="#i-redo"/></svg></b><b><svg viewBox="0 0 24 24"><use href="#i-topo"/><use href="#star"/></svg></b><b><svg viewBox="0 0 24 24"><use href="#i-topo"/><path d="M14 24l1-5 7-9 3 2-7 10z" fill="#e9c84a" stroke="#77651e"/></svg></b><i class="grip"></i><b><svg><use href="#i-tri"/></svg></b><b><svg><use href="#i-move"/></svg></b><i class="arr"></i><b><svg><use href="#i-rot"/></svg></b><b><svg><use href="#i-simp"/></svg></b><b class="off"><svg><use href="#i-ring"/></svg></b><b><svg><use href="#i-part"/></svg></b><b class="off"><svg><use href="#i-ring"/></svg></b><b class="off"><svg><use href="#i-delring"/></svg></b><b><svg><use href="#i-delpart"/></svg></b><b><svg><use href="#i-reshape"/></svg></b><b><svg><use href="#i-offset"/></svg></b><b><svg><use href="#i-rev"/></svg></b><b><svg><use href="#i-trim"/></svg></b><b><svg><use href="#i-split1"/></svg></b><b><svg><use href="#i-split2"/></svg></b><b class="off"><svg><use href="#i-merge"/></svg></b><b class="off"><svg><use href="#i-mergea"/></svg></b><b class="off"><svg><use href="#i-rotp"/></svg></b><i class="arr dim"></i></div>

<div class="toolbar"><i class="grip first"></i><b><svg class="magnet"><use href="#i-magnet"/></svg></b><b class="off w36"><svg viewBox="0 0 24 24"><use href="#i-snapv"/><path d="M15 20h9l-4.500 4z" fill="#222"/></svg></b><b class="off"><svg viewBox="0 0 24 24"><use href="#i-snapp"/><path d="M16 20h8l-4 4z" fill="#222"/></svg></b><div class="spin tol"><span>12</span><i></i></div><div class="combo unit"><span>px</span><i></i></div><b><svg><use href="#i-axis"/></svg></b><b class="off"><svg><use href="#i-cross"/></svg></b><b class="off"><svg><use href="#i-cross2"/></svg></b><i class="arr dim"></i></div>

<div class="toolbar last"><i class="grip first"></i><b><svg class="big"><use href="#i-qms"/></svg></b><b><svg class="big"><use href="#i-qms2"/></svg></b></div>

<main class="work">
<aside class="docks">
<h2>Browser</h2>
<div class="minibar"><svg><use href="#i-add"/></svg><svg viewBox="0 0 24 24"><use href="#i-refresh"/></svg><svg><use href="#i-filter"/></svg><svg><use href="#i-up"/></svg><svg><use href="#i-info"/></svg></div>
<ul class="tree browser">
<li><i></i><svg><use href="#i-fav"/></svg>Favorites</li>
<li><i class="c"></i><svg><use href="#i-bm"/></svg>Spatial Bookmarks</li>
<li><i class="c"></i><svg><use href="#i-fproj"/></svg>Project Home</li>
<li><i class="c"></i><svg><use href="#i-fhome"/></svg>Home</li>
<li><i class="c"></i><svg><use href="#i-folder"/></svg>C:\</li>
<li><i class="o"></i><svg><use href="#i-gpkg"/></svg>GeoPackage</li>
<li class="l1"><i class="o"></i><svg class="s"><use href="#i-db"/></svg>GIS4Schools_GeoPackage.gpkg</li>
<li class="l2 sel"><i></i><svg class="wide" fill="#8cb6dc" stroke="#5b87b4"><use href="#i-poly"/></svg>Lakes</li>
<li class="l2"><i></i><svg class="s"><use href="#i-raster"/></svg>Land_Cover</li>
<li class="l2"><i></i><svg class="wide" fill="#eee" stroke="#888"><use href="#i-poly"/></svg>Municipalities_OSM</li>
<li class="l2"><i></i><svg><use href="#i-tbl"/></svg>Population</li>
<li class="l2"><i></i><svg class="thin"><use href="#i-vec"/></svg>River_network</li>
<li class="l2"><i></i><svg><use href="#i-pts"/></svg>Temperature</li>
<li class="l2"><i></i><svg class="s"><use href="#i-raster"/></svg>Temperature_distribution</li>
<li><i></i><svg><use href="#i-feather"/></svg>SpatiaLite</li>
</ul>
<div class="splitter"></div>
<h2 class="lay">Layers</h2>
<div class="minibar lb"><svg><use href="#i-brush"/></svg><svg><use href="#i-group"/></svg><svg><use href="#i-eye"/></svg><svg><use href="#i-filter"/></svg><svg><use href="#i-eps"/></svg><i class="arr"></i><svg><use href="#i-down"/></svg><svg><use href="#i-up"/></svg><svg><use href="#i-rem"/></svg></div>
<ul class="tree layers">
<li class="sel"><i></i><em></em><svg class="ed"><use href="#i-editing"/></svg><u>River_network</u></li>
<li><i></i><em></em><span class="swatch"></span>Lakes</li>
<li><i class="o"></i><em></em><svg class="ra"><use href="#i-raster"/></svg>OSM Standard</li>
</ul>
</aside>

<svg class="map" viewBox="272 219 1406 812" preserveAspectRatio="none">
<defs>
<g id="t"><path d="M-3.800-3.500c2-1.500 3.800 0 3.200 2.200-1 1.800-3.200 1-3.600-.5s0-1.200.4-1.700M-2 .5v3.500M2.600-3.700L.6 2.200h4zM2.600 2.200V4" fill="none" stroke="#8db081" stroke-width=".9"/></g>
<g id="r"><path d="M3.800-3.500c-2-1.500-3.800 0-3.200 2.200 1 1.800 3.200 1 3.600-.5s0-1.200-.4-1.700M2 .5v3.500M-2.600-3.700l-2 5.900h4zM-2.600 2.200V4" fill="none" stroke="#8db081" stroke-width=".9"/></g>
<pattern id="trees" x="980" y="215" width="240" height="239" patternUnits="userSpaceOnUse">
<use href="#t" x="12" y="6"/><use href="#t" x="38" y="6"/><use href="#t" x="97" y="6"/><use href="#r" x="73" y="18"/><use href="#t" x="131" y="18"/><use href="#t" x="202" y="17"/><use href="#t" x="165" y="24"/><use href="#t" x="231" y="26"/><use href="#t" x="45" y="30"/><use href="#t" x="104" y="27"/><use href="#t" x="18" y="39"/><use href="#t" x="185" y="41"/><use href="#t" x="64" y="49"/><use href="#t" x="135" y="47"/><use href="#t" x="217" y="53"/><use href="#t" x="104" y="60"/><use href="#t" x="38" y="64"/><use href="#r" x="165" y="63"/><use href="#t" x="230" y="63"/><use href="#t" x="79" y="70"/><use href="#t" x="193" y="72"/><use href="#t" x="138" y="77"/><use href="#r" x="224" y="86"/><use href="#t" x="52" y="89"/><use href="#r" x="110" y="88"/><use href="#t" x="23" y="92"/><use href="#r" x="165" y="97"/><use href="#t" x="194" y="100"/><use href="#t" x="81" y="105"/><use href="#t" x="134" y="107"/><use href="#t" x="42" y="117"/><use href="#t" x="219" y="118"/><use href="#r" x="8" y="115"/><use href="#t" x="102" y="121"/><use href="#t" x="158" y="124"/><use href="#r" x="71" y="130"/><use href="#t" x="186" y="132"/><use href="#r" x="129" y="142"/><use href="#t" x="48" y="148"/><use href="#t" x="104" y="150"/><use href="#t" x="232" y="146"/><use href="#r" x="20" y="153"/><use href="#r" x="173" y="155"/><use href="#r" x="206" y="153"/><use href="#r" x="75" y="169"/><use href="#r" x="137" y="167"/><use href="#r" x="40" y="174"/><use href="#t" x="230" y="174"/><use href="#r" x="100" y="181"/><use href="#t" x="195" y="180"/><use href="#t" x="156" y="184"/><use href="#t" x="15" y="189"/><use href="#r" x="37" y="209"/><use href="#t" x="134" y="201"/><use href="#t" x="70" y="199"/><use href="#r" x="174" y="204"/><use href="#r" x="98" y="208"/><use href="#r" x="199" y="212"/><use href="#t" x="231" y="206"/><use href="#r" x="61" y="227"/><use href="#r" x="123" y="227"/><use href="#r" x="182" y="233"/><use href="#r" x="222" y="230"/>
</pattern>
<path id="forest" d="M272 219H1391L1386 280 1412 288 1400 330 1350 385 1275 450 1236 437 1226 472 1240 474 1232 518 1215 517 1204 564H1128L1121 575 1118 598 1174 612 1165 633 1104 770 1122 784 1113 802 1090 842 1040 882 1045 910 1033 941 1019 933 990 962H272z"/>
<path id="ss340" d="M1430 215Q1430 240 1427 258T1422 288 1413 318 1390 348 1357 382L1310 422Q1290 437 1277 452T1260 478 1253 508 1253 535 1255 565L1262 640Q1265 665 1258 687T1247 717 1227 747L1187 790 1153 833 1113 880 1073 923 1030 973 980 1035"/>
<path id="sp71" d="M1477 215L1474 298Q1473 322 1465 338T1447 368 1437 402 1430 435 1417 462L1397 495Q1388 505 1387 515L1382 548 1378 582 1374 645 1372 673Q1372 690 1367 707T1353 740L1323 780 1297 823 1263 877 1230 920 1207 953 1190 973Q1184 980 1183 997L1181 1035"/>
</defs>
<rect x="272" y="219" width="1406" height="812" fill="#dfdfdf"/>
<use href="#forest" fill="#add19e"/><use href="#forest" fill="url(#trees)"/>
<path d="M990 987l15 10-15 20z" fill="#add19e"/><path d="M990 986l13 11" stroke="#aad3df" stroke-width="3"/>
<g fill="#d9d0c9" stroke="#c9bab0" stroke-width=".8"><path d="M1448 244l12 1-1 21-11-1zM1462 259h6v16h-6zM1425 313l6 1-2 18-9-2zM1421 366l16 7-6 12-14-6zM1412 386h15l-4 46-12-1zM1370 496h10v8h-10zM1395 526l11 2-3 20-9-1zM1340 579h19v25h-19zM1070 573l5 1v5h-6zM1171 729l5 5-5 5-5-5zM1146 746l9 8-7 8-8-9zM1164 750l6 5-6 5-5-6zM1153 775l11 2-2 11-10-3zM1140 799l8 5-7 10-8-6zM1125 806l7 5-6 8-6-7zM1202 926l8 5-14 30-15-10zM1070 1024l14 7h-16zM1115 1024l14 7h-16zM1318 762l10 8-8 10-12-7z"/></g>
<path d="M1329 699L1357 721 1340 745 1321 767 1298 782 1272 763 1304 718 1311 720z" fill="#aacbaf"/>
<path d="M1304 786l8 4-10 20-13-6z" fill="#eee"/>
<path d="M1203 877l14 11-19 27-11-9z" fill="#aae0cb"/>
<g fill="#aad3df" stroke="#8ac6dc"><rect x="1438" y="291" width="8" height="14" rx="4"/><path d="M1377 448l7 3-5 12-7-3z"/></g>
<path d="M1385 656l10-8-1 40-8 40-10 6 4-20z" fill="#c8facc"/>
<path d="M990 571C1020 579 1035 587 1060 587S1110 579 1157 572s50 1 96-7 60 4 90 6 40-2 65-3" fill="none" stroke="#aad3df" stroke-width="9"/>
<g fill="none" stroke="#888" stroke-width="1"><path d="M1189 219L1182 248 1155 370 1133 438 1095 545 1061 632 1020 740 990 825M1182 248L1250 234 1320 219M990 845L1018 880 1056 933 1059 993 1030 1030"/></g>
<g fill="#ddd" stroke="#777"><path d="M1179.500 244.500h6v6h-6zM1130.500 435.500h6v6h-6zM1057.500 630h6v6h-6zM1053.500 930h6v6h-6zM1056 990h6v6h-6z"/></g>
<g class="halo"><path id="p1" d="M1291 219L1289 273Q1283 295 1267 313T1247 331L1193 360 1165 375 1140 402Q1115 430 1085 485V520"/><path id="p2" d="M990 367C1025 352 1002 390 992 405S992 430 1000 441 1020 420 1050 418 1040 455 1040 462 1050 470 1055 490L1069 530 1098 515Q1104 522 1095 540T1084 588"/></g>
<g class="path"><use href="#p1"/><use href="#p2"/></g>
<g class="halo"><path id="p3" d="M990 938Q1008 930 1012 912T1030 898 1080 845 1095 808 1107 804"/></g>
<g class="path"><use href="#p3"/><path stroke-width="1.600" d="M1084 590L1125 589Q1155 597 1170 612T1198 662"/><path d="M1198 662Q1170 700 1172 715T1159 742L1177 767Q1160 805 1148 815T1128 850"/></g>
<g class="steps"><path d="M1198 662L1209 668Q1200 690 1181 710L1192 723 1185 735 1193 745 1178 766 1187 776 1180 795M1175 822L1176 853 1171 863 1181 871Q1170 920 1163 980L1165 993 1176 1008M1292 818l-26 21"/></g>
<g fill="none" stroke="#fff" stroke-linecap="round"><path d="M1137 779L1102 832Q1094 860 1077 880" stroke-width="11"/><path d="M1096 860L1115 848Q1125 850 1112 866T1078 890Q1066 890 1080 878L1096 858M1116 860L1090 890 1068 915Q1062 912 1070 912" stroke-width="13"/></g>
<g fill="none"><use href="#ss340" stroke="#b58a3d" stroke-width="17"/><use href="#ss340" stroke="#fcd6a4" stroke-width="15"/><use href="#sp71" stroke="#aaa" stroke-width="17"/><use href="#sp71" stroke="#fff" stroke-width="15.500"/></g>
<path d="M1248 560v13M1263 558v13" stroke="#444" stroke-width="2"/>
<rect x="1408.500" y="243" width="36" height="17" rx="1" fill="#f2e4d0" stroke="#dcc19a"/><text x="1412" y="256.500" textLength="29" class="m road">SS340</text>
<rect x="1237.500" y="557" width="10" height="18" fill="#f5e3cc" stroke="#dcc19a"/><text x="1240" y="570" class="m road">S</text>
<text transform="translate(1477 311) rotate(-87)" textLength="91" class="m">Strada provinciale 7</text>
<text transform="translate(1307 433) rotate(-41)" textLength="80" class="m">Via delle Frazioni</text>
<text transform="translate(1138 860) rotate(-51)" textLength="82" class="m">Via delle Frazioni</text>
<text transform="translate(1183 937) rotate(-80)" textLength="72" class="m thinm">Via Germanello</text>
<path id="sprp" d="M1274 872L1303 824 1333 778 1355 744 1370 712" fill="none"/><text class="m" textLength="175"><textPath href="#sprp">Strada provinciale 71 Vecchia Regina</textPath></text>
<text transform="translate(1104 582) rotate(-4)" textLength="83" class="m river">Torrente Caraello</text>
<g class="m poi"><text x="1366" y="501">Villa</text><text x="1362" y="513">Negri</text><text x="1386" y="542">Villa</text><text x="1380" y="554">Regina</text><text x="1339" y="589">Villa</text><text x="1334" y="601">Marco</text></g>
<g class="m hotel"><text x="1436" y="336">Hotel Plinio</text><text x="1447" y="347">Au Lac</text></g>
<path d="M1455 315v8M1455 320h13v3M1460 318h7" stroke="#1b8fd6" stroke-width="1.500" fill="none"/>
<g class="m cem"><text x="1300" y="740" textLength="34">Cimitero</text><text x="1300" y="751" textLength="34">di Laglio</text></g>
<g class="m muni"><text x="1173" y="967" textLength="46">Municipio</text><text x="1177" y="978">di Laglio</text></g>
<path d="M1190 946h10v8h-10zM1189 944l6-5 6 5zM1310 767h4v9h2v2h-9v-2h3z" fill="#734a08"/><path d="M1193.500 949h3v5h-3z" fill="#e0d5c8"/>
<g fill="#734a08"><path d="M1437 420h8l-1 9h-6zM1439 416h8v1.500h-8zM1366 708h7l-1 9h-5zM1373 703h5v4h-5z"/></g>
<g class="m park"><text x="1116" y="803">P</text><text x="1296" y="804">P</text></g>
<path d="M1195 787.500h6v6h-6z" fill="#fff" stroke="#1b8fd6" stroke-width="2.500"/>
<g fill="#c87413"><circle cx="1427" cy="375.500" r="2"/><circle cx="1419" cy="391.500" r="2"/><circle cx="1214" cy="755" r="2"/></g>
<path d="M1487.700 219L1485 242 1479 265 1478.700 295 1481.700 303 1475 338 1465 358 1455 378 1450 392 1450.700 415 1448 442 1438 475 1418 515 1408 545 1393 585 1384.500 612 1386.700 628 1386 653 1392.700 662 1393 687 1388 713 1382.700 730 1374 735 1357 763 1340 782 1332 783 1320 797 1312 813Q1319 822 1319 828T1315 843 1303 857 1280 868L1267 885 1243 917Q1237 937 1227 953T1210 971L1200 973 1194 982V988L1206 1001 1188 1031H1678V219z" fill="#3eb7ff"/>
<rect x="1359.500" y="646" width="27" height="17" fill="#f2f2f2" stroke="#ccc"/><text x="1362" y="659" textLength="23" class="m road2">SP71</text>
<path d="M1210 935v-3l6-6 7 6v6h-13z" fill="#bf0b18"/><path d="M1216.500 930v7M1213 933.500h7" stroke="#fff" stroke-width="1.600"/>
<path d="M1176 993v13M1171.500 997.500h9" stroke="#000" stroke-width="2.200"/><circle cx="1199" cy="997" r="2" fill="#c87413"/>
<path d="M272 480L990 573 1041 590 1145 577 1180 573.500H1207L1237 565 1250 562 1330 571.500H1404" fill="none" stroke="#e31a1c" stroke-width="1.200"/>
</svg>
</main>

<footer class="status">
<div class="locator"><svg><use href="#i-search"/></svg><span>Type to locate (Ctrl+K)</span></div>
<div class="right"><span class="lbl coordl">Coordinate</span><div class="field coord">511051.5,5081448.4</div><svg class="ext"><use href="#i-ext"/></svg><span class="lbl scalel">Scale</span><div class="combo scale"><span>1:4332</span><i></i></div><svg class="lock"><use href="#i-lock"/></svg><span class="lbl magl">Magnifier</span><div class="spin mag"><span>100%</span><i></i></div><span class="lbl">Rotation</span></div>
</footer>
</div>

<section class="dialog">
<header><h1>River_network - Feature Attributes</h1><button class="close"><svg viewBox="0 0 14 14"><path d="M2.500 2.500l9 9M11.500 2.500l-9 9" stroke="#fff" stroke-width="2.800"/></svg></button></header>
<div class="form">
<label>Name</label><div class="input"><span class="val">Torrente Caraello</span><svg><use href="#i-clear"/></svg></div>
<label>Source</label><div class="input focus"><span class="caret">OpenStreetMap basemap</span><svg><use href="#i-clear"/></svg></div>
</div>
<div class="buttons"><div class="btn ok">OK</div><div class="btn">Cancel</div></div>
</section>

<div class="mark box1"><svg viewBox="0 0 50 50"><path d="M9 12l9.500 18L28 15h10" fill="none" stroke="#71b973" stroke-width="3"/><g fill="#bbb" stroke="#777" stroke-width="1.500"><path d="M7 9.500h4.500V14H7zM16 28h4.500v4.500H16zM25.500 13H30v4.500h-4.500zM35 13h4.500v4.500H35z"/></g><rect x="25" y="28" width="17" height="17" rx="3" fill="#c8a20c"/><path d="M33.500 30.500v12M28.300 33.500l10.400 6M38.700 33.500l-10.400 6" stroke="#fff" stroke-width="2.300"/><circle cx="33.500" cy="36.500" r="3" fill="#fff"/><circle cx="33.500" cy="36.500" r="1.600" fill="#c8a20c"/></svg></div>
<div class="mark box4"></div>
<div class="ring"></div>
<div class="num n1">1</div><div class="num n2">2</div><div class="num n3">3</div><div class="num n4">4</div>
</body>
</html>
```
FILE: styles.css
```css
* { box-sizing: border-box; }
body { margin: 0; width: 1678px; height: 1109px; overflow: hidden; position: relative; background: #fff; color: #111; font: 15px "Open Sans", "Noto Sans", sans-serif; letter-spacing: -.35px; }
.defs { display: none; }
h1, h2, ul { margin: 0; padding: 0; font-weight: 400; list-style: none; }
u { text-decoration-thickness: 1px; text-underline-offset: 2px; }

.ico-sans { font: 12px "Open Sans", sans-serif; fill: #333; }
.ico-11 { font: bold 8px "Open Sans", sans-serif; letter-spacing: -.3px; }
.ico-i { font: italic bold 14px "Liberation Serif", serif; fill: #fff; }
.ico-i2 { font: italic bold 11px "Liberation Serif", serif; fill: #fff; }
.ico-t { font: bold 15px "Liberation Serif", serif; fill: #444; }

.titlebar { height: 32px; display: flex; align-items: center; gap: 5px; padding-left: 34px; font-size: 15px; letter-spacing: -.2px; }
.logo { width: 20px; height: 20px; }
.app { margin-left: 31px; height: 1030px; display: flex; flex-direction: column; background: #f0f0f0; }
.menubar { height: 25px; display: grid; grid-template-columns: 63px 43px 48px 52px 70px 64px 59px 58px 80px 47px 51px 89px 40px; padding-left: 11px; align-items: center; border-bottom: 1px solid #d4d4d4; white-space: nowrap; }

.toolbar { height: 41px; display: flex; align-items: center; background: linear-gradient(#fafafa, #eee); border-bottom: 2px solid #c8c8c8; }
.toolbar + .toolbar { height: 40px; border-bottom-width: 1px; border-color: #b4b4b4; }
.toolbar.last { height: 39px; }
.toolbar b { width: 34px; flex: none; display: flex; justify-content: center; align-items: center; font-weight: 400; }
.toolbar b svg { width: 24px; height: 24px; overflow: visible; }
.toolbar b svg.big { width: 25px; height: 25px; }
.toolbar b svg.magnet { width: 22px; height: 22px; }
.toolbar .w36 { width: 38px; }
.toolbar .on { height: 32px; background: #dadada; border: 1px solid #b0b0b0; border-radius: 2px; }
.off svg { opacity: .32; filter: saturate(.35); }
.grip { flex: none; width: 20px; height: 19px; background: radial-gradient(circle, #c4c4c4 .8px, transparent 1px) 8px 0 / 3px 3px; background-clip: content-box; padding: 0 8px 0 7px; }
.grip.first { width: 15px; padding: 0 4px 0 6px; }
.grip.n18 { width: 18.500px; padding-right: 6px; }
.sep { width: 9px; height: 20px; background: linear-gradient(#ccc, #ccc) center / 1px 100% no-repeat; }
.arr { flex: none; width: 16px; height: 6px; background: #444; clip-path: polygon(3px 0, 13px 0, 8px 5px); }
.arr.n15 { width: 15px; }
.arr.n14 { width: 14px; }
.arr.dim { background: #888; }

.spin, .combo, .field { display: flex; align-items: center; background: #fff; border: 1px solid #adadad; border-radius: 3px; font-size: 14px; }
.spin span, .combo span { flex: 1; }
.spin i { width: 17px; align-self: stretch; border-left: 1px solid #b5b5b5; display: flex; flex-direction: column; justify-content: center; align-items: center; gap: 3px; }
.spin i::before, .spin i::after { content: ""; width: 9px; height: 5px; background: #666; clip-path: polygon(50% 0, 100% 100%, 0 100%); }
.spin i::after { transform: scaleY(-1); }
.combo i { width: 10px; height: 5px; background: #666; margin-right: 10px; clip-path: polygon(0 0, 100% 0, 50% 100%); }
.tol { width: 94px; height: 24px; margin-left: -3px; padding-left: 4px; background: #efefef; color: #888; }
.tol i::before, .tol i::after, .unit i { background: #999; }
.unit { width: 105px; height: 25px; margin: 0 0 0 1px; padding-left: 4px; background: #f6f6f6; color: #888; border-color: #c4c4c4; }

.work { flex: none; height: 814px; display: flex; }
.docks { width: 241px; display: flex; flex-direction: column; }
.map { width: 1406px; height: 812px; margin-top: 2px; display: block; outline: 1px solid #b0b0b0; }
h2 { font-size: 14.500px; height: 25px; line-height: 24px; padding-left: 5px; }
h2.lay { height: 27px; line-height: 24px; }
.minibar { height: 28px; display: flex; gap: 10px; padding: 3px 0 0 9px; }
.minibar svg { width: 16px; height: 16px; overflow: visible; }
.minibar.lb { height: 27px; padding-top: 1px; gap: 9.700px; }
.minibar .arr { margin: 5px -5px 0; width: 17px; }
.tree { background: #fff; border: 1px solid #b4b4b4; border-right: 0; overflow: hidden; white-space: nowrap; }
.browser { height: 334px; }
.layers { height: 375px; }
.tree li { height: 22.750px; display: flex; align-items: center; padding-left: 6px; }
.tree li svg { width: 19px; height: 19px; margin: 0 7px 0 5px; flex: none; }
.tree li svg.s { width: 17px; height: 17px; margin: 0 8px 0 6px; }
.tree li svg.wide { width: 21px; height: 17px; margin: 0 6px 0 4px; }
.tree li svg.thin { opacity: .7; }
.tree li.l1 { padding-left: 32px; }
.tree li.l2 { padding-left: 58px; }
.sel { background: #f0f0f0; }
.tree i { width: 19px; height: 9px; flex: none; }
.tree i.c { background: #666; clip-path: polygon(4px 0, 9px 4.500px, 4px 9px); }
.tree i.o { background: #555; clip-path: polygon(2px 2px, 12px 2px, 7px 7px); }
.splitter { height: 7px; background: radial-gradient(circle, #c4c4c4 .8px, transparent 1px) 193px 2px / 3px 3px; clip-path: inset(2px 29px 2px 193px); }
.layers li { font-weight: 700; font-size: 14.500px; letter-spacing: -.1px; }
.tree em { width: 17px; height: 17px; margin-left: 4px; border: 1px solid #aaa; background: #fff; flex: none; display: flex; justify-content: center; }
.tree em::before { content: ""; width: 6px; height: 12px; border: solid #111; border-width: 0 2px 2px 0; transform: rotate(38deg); }
.tree li svg.ed { width: 17px; height: 18px; margin: 0 6px 0 6px; }
.tree li svg.ra { width: 17px; margin: 0 7px 0 9px; }
.swatch { width: 20px; height: 20px; margin: 0 7px 0 6px; background: #3eb7ff; }

.status { height: 31px; display: flex; border-top: 1px solid #b4b4b4; font-size: 13px; }
.locator { width: 330px; height: 25px; margin: 4px 0 0 4px; border: 1px solid #b0b0b0; border-radius: 2px; background: #fff; color: #777; display: flex; align-items: center; gap: 7px; padding-left: 8px; letter-spacing: -.2px; }
.locator svg { width: 14px; height: 14px; }
.status .right { margin-left: 688px; padding-top: 2px; display: flex; align-items: center; white-space: nowrap; letter-spacing: -.4px; }
.lbl { flex: none; }
.coordl { width: 67px; }
.scalel { width: 35px; }
.magl { width: 58px; }
.field, .scale, .mag { height: 25px; font-size: 13px; padding-left: 6px; }
.coord { width: 138px; letter-spacing: -.05px; }
.ext { width: 20px; height: 24px; margin: 0 13px 0 5px; }
.scale { width: 97px; padding-left: 4px; letter-spacing: -.2px; }
.lock { width: 17px; height: 25px; margin: 0 9px 0 11px; }
.mag { width: 95px; padding-left: 4px; margin-right: 9px; letter-spacing: -.1px; }

.dialog { position: absolute; left: 271px; top: 172px; width: 719px; height: 937px; border: 2px solid #bcbcbc; border-bottom-width: 1px; background: #f0f0f0; display: flex; flex-direction: column; }
.dialog > header { height: 61px; background: #fff; display: flex; justify-content: space-between; padding-left: 12px; }
h1 { font-size: 24px; line-height: 60px; letter-spacing: -.2px; }
.close { width: 42px; height: 42px; margin-top: 12px; padding: 0; border: 0; background: #c75050; display: grid; place-items: center; }
.close svg { width: 14px; height: 14px; }
.form { width: 657px; height: 116px; margin: 26px 0 0 16px; border: 3px solid #f00; display: grid; grid-template-columns: 78px 546px; grid-template-rows: 39px 40px; row-gap: 12px; padding: 8px 0 0 15px; align-items: center; font: 20.500px "Noto Sans", sans-serif; letter-spacing: -.3px; }
.input { height: 100%; border: 2px solid #adadad; border-radius: 4px; background: #fff; display: flex; align-items: center; justify-content: space-between; padding: 0 12px 0 3px; }
.input.focus { border-color: #55aef5; }
.input svg { width: 22px; height: 18px; }
.val { letter-spacing: .15px; }
.caret { border-right: 2px solid #111; line-height: 26px; letter-spacing: -.25px; }
.buttons { display: flex; gap: 10px; margin: auto 16px 17px auto; }
.btn { width: 134px; height: 41px; border: 1.500px solid #adadad; border-radius: 3px; background: linear-gradient(#fefefe, #efefef); font: 20px/41px "Noto Sans", sans-serif; text-align: center; letter-spacing: -.4px; }
.btn.ok { background: linear-gradient(#f7f9fb, #dfe7ee); padding-right: 3px; }

.mark { position: absolute; border: 3px solid #f00; }
.box1 { left: 550px; top: 91px; width: 56px; height: 56px; background: #f7f7f7; }
.box1 svg { display: block; width: 50px; height: 50px; }
.box4 { left: 691px; top: 1047px; width: 138px; height: 43px; }
.ring { position: absolute; left: 1385px; top: 553px; width: 35px; height: 35px; border: 5px solid #f00; border-radius: 50%; }
.num { position: absolute; width: 47px; height: 47px; border-radius: 50%; background: #f00; color: #fff; font: 34px/47px "Open Sans", sans-serif; text-align: center; letter-spacing: 0; }
.n1 { left: 525px; top: 125px; }
.n2 { left: 1417px; top: 570px; }
.n3 { left: 919px; top: 349px; }
.n4 { left: 668px; top: 1019px; }

.m { font: 11.500px "Noto Sans", sans-serif; fill: #222; letter-spacing: -.2px; paint-order: stroke; }
.road { fill: #5c3a1c; }
.road2 { fill: #444; font-size: 11px; }
.thinm { fill: #444; stroke: #e8e8e8; stroke-width: 2px; }
.river { fill: #4d80b3; font-size: 11px; font-style: italic; }
.poi { fill: #666; font-size: 10.500px; stroke: #e8e8e8; stroke-width: 1.500px; }
.hotel { fill: #1b7fe0; font-size: 10px; stroke: #eee; stroke-width: 1.500px; }
.cem { fill: #4a6b52; font-size: 9.500px; font-style: italic; stroke: #d5e5d5; stroke-width: 2px; }
.muni { fill: #8a5a22; font-size: 10.500px; stroke: #eee; stroke-width: 1.500px; }
.park { fill: #1b8fd6; font-size: 14px; font-weight: 700; }
.halo { fill: none; stroke: #d5e2cc; stroke-width: 3.500px; opacity: .8; }
.path { fill: none; stroke: #fa8072; stroke-width: 1.500px; stroke-dasharray: 2.500 2.500; }
.steps { fill: none; stroke: #fa7a6e; stroke-width: 3.500px; stroke-dasharray: 1.600 1.100; }
```
